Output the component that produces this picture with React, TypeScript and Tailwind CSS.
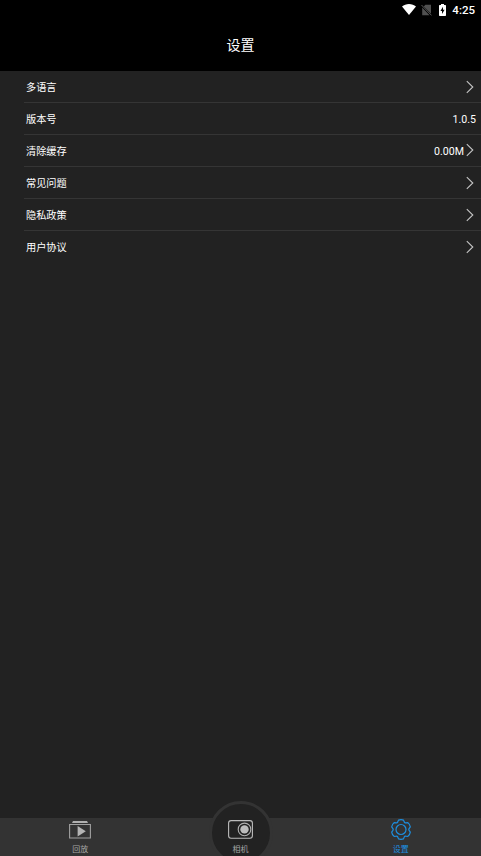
import { FC, ReactNode } from 'react';

type SettingRowProps = {
  label: string;
  value?: string;
  hasArrow?: boolean;
  isLast?: boolean;
};

type TabItemProps = {
  label: string;
  icon: ReactNode;
  isActive?: boolean;
};

const rows: SettingRowProps[] = [
  { label: '多语言', hasArrow: true },
  { label: '版本号', value: '1.0.5' },
  { label: '清除缓存', value: '0.00M', hasArrow: true },
  { label: '常见问题', hasArrow: true },
  { label: '隐私政策', hasArrow: true },
  { label: '用户协议', hasArrow: true }
];

const WifiIcon = () => (
  <svg className="w-[14px] h-[11px]" viewBox="0 0 14 11" fill="#fff">
    <path d="M7 11 0 2.6C1.9 1 4.3 0 7 0s5.1 1 7 2.6Z" />
  </svg>
);

const NoSimIcon = () => (
  <svg className="w-[11px] h-[12px]" viewBox="0 0 11 12">
    <path d="M4.4 .8H10v9L2.8 2.4ZM1.2 3.6 8.6 11.2H1.2Z" fill="#505050" />
    <path d="m.5 1 10 10.4" stroke="#5c5c5c" strokeWidth="1" />
  </svg>
);

const BatteryIcon = () => (
  <svg className="w-[7px] h-[12px]" viewBox="0 0 7 12">
    <path d="M2 0h3v1h1.3q.7 0 .7.7v9.6q0 .7-.7.7H.7q-.7 0-.7-.7V1.7Q0 1 .7 1H2Z" fill="#fff" />
    <path d="M4 2.8 1.4 7H3v3L5.6 5.8H4Z" fill="#000" />
  </svg>
);

const ArrowIcon = () => (
  <svg className="w-[8px] h-[14px]" viewBox="0 0 8 14" fill="none">
    <path d="m.8 1.2 6 5.8-6 5.8" stroke="#c4c4c4" strokeWidth="1.1" />
  </svg>
);

const PlaybackIcon = () => (
  <svg className="w-[22px] h-[19px]" viewBox="0 0 22 19" fill="none">
    <path d="M4 1h14l1 2H3Z" fill="#b0b0b0" />
    <path d="M.6 4.5h20.8V18H.6Z" stroke="#a0a0a0" strokeWidth="1.1" />
    <path d="M8.600 6v10.600l8.200-5.300Z" fill="#b4b4b4" />
  </svg>
);

const CameraIcon = () => (
  <svg className="w-[25px] h-[19px]" viewBox="0 0 25 19" fill="none">
    <rect x=".6" y=".6" width="23.8" height="17.6" rx="2.5" stroke="#bcbcbc" strokeWidth="1.1" />
    <circle cx="16.5" cy="9.4" r="6.3" stroke="#b0b0b0" strokeWidth="1.1" />
    <circle cx="16.5" cy="9.4" r="4.2" fill="#bcbcbc" />
  </svg>
);

const GearIcon = () => (
  <svg className="w-[20px] h-[21px]" viewBox="0 0 20 21" fill="none" stroke="#1d8fe0" strokeWidth="1.2">
    <path
      d="M7.5 1.1Q10 .2 12.5 1.1L13.3 3.1Q13.8 4 14.8 3.8L16.9 3.6Q18.9 5.2 19.3 7.9L18.1 9.6Q17.5 10.5 18.1 11.4L19.3 13.1Q18.9 15.8 16.9 17.4L14.8 17.2Q13.8 17 13.3 17.9L12.5 19.9Q10 20.8 7.5 19.9L6.7 17.9Q6.2 17 5.2 17.2L3.1 17.4Q1.1 15.8.7 13.1L1.9 11.4Q2.5 10.5 1.9 9.6L.7 7.9Q1.1 5.2 3.1 3.6L5.2 3.8Q6.2 4 6.7 3.1Z"
      strokeLinejoin="round"
    />
    <circle cx="10" cy="10.5" r="5" />
  </svg>
);

const SettingRow: FC<SettingRowProps> = ({ label, value, hasArrow, isLast }) => {
  return (
    <div
      className={`ml-6 h-8 flex items-center justify-between border-b ${
        isLast ? 'border-transparent' : 'border-[#353535]'
      }`}
    >
      <span className="pl-0.5 pt-[3px] text-[10.2px]">{label}</span>
      <div className={`flex items-center gap-0.5 ${hasArrow ? 'pr-[7px]' : 'pr-[5px]'}`}>
        {value && <span className="pt-[2px] text-[10.6px]">{value}</span>}
        {hasArrow && <ArrowIcon />}
      </div>
    </div>
  );
};

const TabItem: FC<TabItemProps> = ({ label, icon, isActive }) => {
  return (
    <div
      className={`relative flex-1 flex flex-col items-center pt-px text-[8px] leading-[10px] ${
        isActive ? 'text-[#1d8fe0]' : 'text-[#a4a4a4]'
      }`}
    >
      <div className="h-[21px] flex items-center">{icon}</div>
      <span className="mt-[5px]">{label}</span>
    </div>
  );
};

const App = () => {
  return (
    <div className="h-screen flex flex-col overflow-hidden bg-[#222222] text-white font-['Roboto','Noto_Sans_CJK_SC',sans-serif]">
      <header className="h-[71px] shrink-0 bg-black">
        <div className="h-[19px] flex items-center justify-end pr-[6px]">
          <WifiIcon />
          <div className="ml-[5px] flex">
            <NoSimIcon />
          </div>
          <div className="ml-[7px] flex">
            <BatteryIcon />
          </div>
          <span className="ml-[6px] pt-px text-[11.5px] font-medium leading-5">4:25</span>
        </div>
        <h1 className="h-[52px] pt-px flex items-center justify-center text-[14px]">设置</h1>
      </header>

      <main className="flex-1">
        {rows.map((row, index) => (
          <SettingRow key={row.label} {...row} isLast={index === rows.length - 1} />
        ))}
      </main>

      <nav className="relative h-[38px] shrink-0 flex bg-[#333333]">
        {/* round bump behind the middle tab */}
        <div className="absolute left-[209px] -top-[17px] size-[64px] rounded-full border-[3px] border-[#333333] bg-[#222222]" />
        <TabItem label="回放" icon={<PlaybackIcon />} />
        <TabItem label="相机" icon={<CameraIcon />} />
        <TabItem label="设置" icon={<GearIcon />} isActive />
      </nav>
    </div>
  );
};

export default App;
